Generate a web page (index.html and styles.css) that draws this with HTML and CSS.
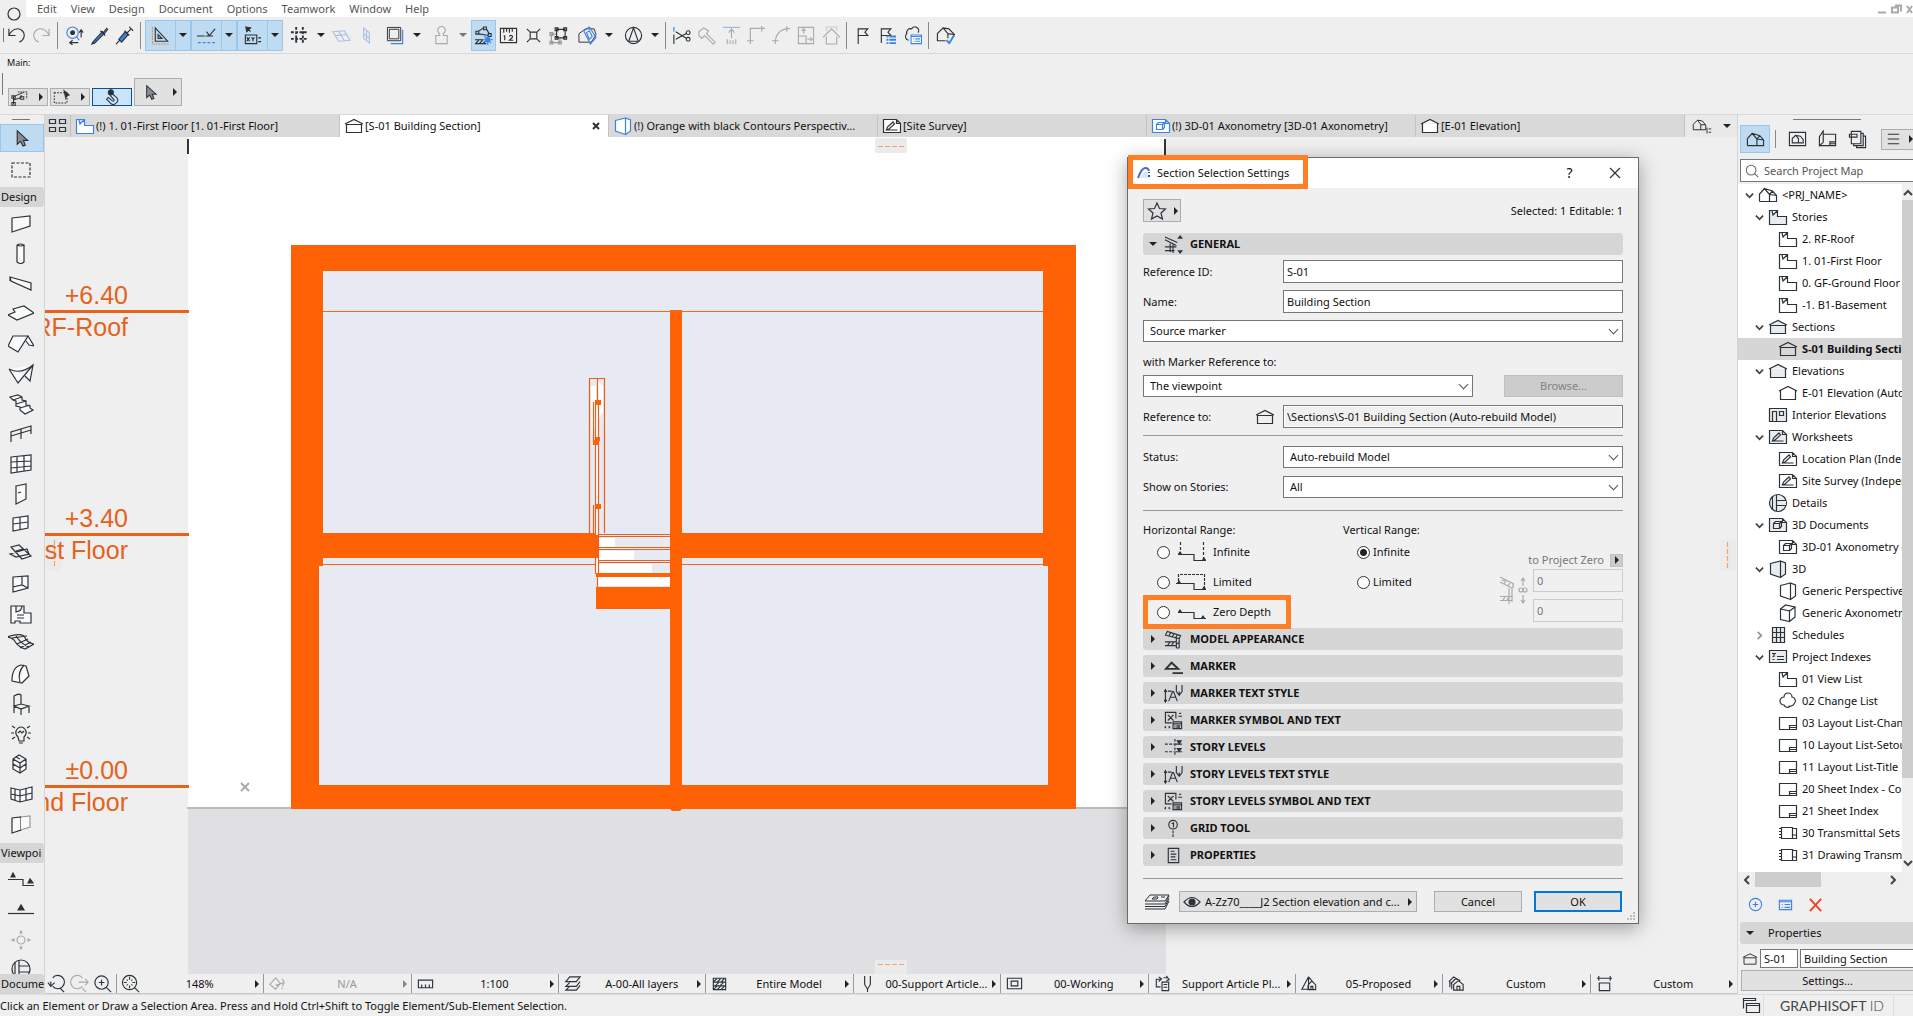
FILE: index.html
```html
<!DOCTYPE html>
<html lang="en">
<head>
<meta charset="utf-8">
<title>Section Selection Settings</title>
<link rel="stylesheet" href="styles.css">
</head>
<body>
<svg class="defs" aria-hidden="true">
  <symbol id="story" viewBox="0 0 20 20"><path d="M1.500 3.500h8v6h9v8h-17zM4 4l1 4 4-4"/></symbol>
  <symbol id="section" viewBox="0 0 20 20"><path d="M2.500 8.500h15v8h-15zM1 8l9-4.500L19 8"/></symbol>
  <symbol id="elevation" viewBox="0 0 20 20"><path d="M1 8l9-4.500L19 8M2.500 7.500v9h15v-9"/></symbol>
  <symbol id="interior" viewBox="0 0 20 20"><path d="M1.500 3.500h17v13h-17zM4.500 16.500v-10h4v10M11.500 6.500h4v4h-4z"/></symbol>
  <symbol id="worksheet" viewBox="0 0 20 20"><path d="M1.500 3.500h13l4 4v9h-17zM14.500 3.500v4h4M4.500 14l1-3 5.500-5 1.500 2-5.500 5zM4.500 14h11"/></symbol>
  <symbol id="detail" viewBox="0 0 20 20"><circle cx="10" cy="10" r="8.500"/><path d="M8.500 2v16M4.500 4v12M18 7.500H8.500v5H18"/></symbol>
  <symbol id="doc3d" viewBox="0 0 20 20"><path d="M1.500 3.500h13l4 4v9h-17zM14.500 3.500v4h4M5.500 8.500h6v5h-6zM5.500 8.500l2-2h6l-2 2M13.500 6.500v5l-2 2"/></symbol>
  <symbol id="persp" viewBox="0 0 20 20"><path d="M2.500 4.500l10-2.500v16.500L2.500 15zM12.500 2l5 2v11l-5 3.500"/></symbol>
  <symbol id="axo" viewBox="0 0 20 20"><path d="M2.500 6l9 2v10.500l-9-2zM2.500 6l5-4 9.500 2-5.500 4M17 4v10l-5.500 4.500"/></symbol>
  <symbol id="schedule" viewBox="0 0 20 20"><path d="M4.500 2.500h12v15h-12zM4.500 7.500h12M4.500 12.500h12M8.500 2.500v15M12.500 2.500v15"/></symbol>
  <symbol id="index" viewBox="0 0 20 20"><path d="M1.500 3.500h17v12h-17zM4 6.500h4M6 6.500v3M4.500 12.500h2M9 9.500h7M9 12.500h7M4.500 9.500h2"/></symbol>
  <symbol id="cloud" viewBox="0 0 20 20"><path d="M6 6a4 4 0 0 1 8 0a4 4 0 0 1 2 7a4 4 0 0 1-4 2a3.500 3.500 0 0 1-6-1a4 4 0 0 1 0-8z"/></symbol>
  <symbol id="layout" viewBox="0 0 20 20"><path d="M1.500 4.500h17v12h-17zM11.500 16.500v-4h7M11.500 14.500h7"/></symbol>
  <symbol id="transmit" viewBox="0 0 20 20"><path d="M3.500 4.500h11v11h-11zM14.500 5.500h4v10h-4M14.500 12h4M1 5.500h3M1 8.500h3M1 11.500h3M1 14.500h3"/></symbol>
  <symbol id="house" viewBox="0 0 20 20"><path d="M1.500 16.500V9l5-5.500 5 6v7M1.500 16.500h17v-6l-4-4.500-8-2.500M11.500 9.500l7 1M11.500 9.500l3-3.500"/></symbol>
  <symbol id="chev" viewBox="0 0 10 10"><path d="M1 3l4 4 4-4"/></symbol>
  <symbol id="tri-r" viewBox="0 0 6 8"><path d="M1 0l4 4-4 4z" fill="currentColor" stroke="none"/></symbol>
  <symbol id="tri-d" viewBox="0 0 8 6"><path d="M0 1h8l-4 4z" fill="currentColor" stroke="none"/></symbol>
  <symbol id="arrow" viewBox="0 0 20 20"><path d="M5.500 2v14l3.500-3 2.500 5 2.500-1-2-5h4.500z" fill="#898d92"/></symbol>
  <symbol id="textstyle" viewBox="0 0 20 20"><path d="M1.500 7v11M0 8.500L1.500 6 3 8.500M0 16.500L1.500 19 3 16.500M4 7.500h4M5 18l4-10h1l4 10M7 14h5M13 1v7l3 4 3-4V1M16 8v4"/></symbol>
  <symbol id="symtext" viewBox="0 0 20 20"><path d="M8 12.500H1.500v-11h11V8M4 4l6 6M10 4l-6 6M9.500 11.500h9v7h-9zM9.500 13.500h9M11 15.500h1M13 15.500h4M11 17h1M13 17h4M16 2.500h2M15 5.500h4M2 16l-1 1 1 1M5 16l1 1-1 1"/></symbol>
  <symbol id="cut" viewBox="0 0 20 20"><path d="M1.500 5.500l2-4 14 4.500-1.500 3zM5 6.500l2-3.500M8.500 7.500l2-3.500M12 8.500l2-3.500M1 12.500h12M1 16.500h12M13 9v10M16 9v10M13 19h3M4 16l2-3M8 16l2-3M13 15l3-2"/></symbol>
</svg>

<header class="menubar">
  <span class="app"><svg viewBox="0 0 14 14"><circle cx="7" cy="7" r="6"/></svg></span>
  <nav><a href="#">Edit</a><a href="#">View</a><a href="#">Design</a><a href="#">Document</a><a href="#">Options</a><a href="#">Teamwork</a><a href="#">Window</a><a href="#">Help</a></nav>
  <svg class="wctl" viewBox="0 0 36 12"><path d="M1 9.500h8M15 4.500h6v5h-6zM18 2.500h6v6M30 3l5 7M35 3l-5 7"/></svg>
</header>

<div class="toolbar">
  <i class="grip"></i>
  <button aria-label="Undo"><svg viewBox="0 0 20 20"><path d="M2 3v7h7M2 10C5 3 12 1 16 5s2 10-3 12"/></svg></button>
  <button aria-label="Redo" class="off"><svg viewBox="0 0 20 20"><path d="M18 3v7h-7M18 10C15 3 8 1 4 5s-2 10 3 12"/></svg></button>
  <i class="sep"></i>
  <button aria-label="Find"><svg viewBox="0 0 20 20"><g class="bl"><circle cx="8" cy="7" r="6"/><path d="M12 11l3 4"/></g><circle cx="8" cy="7" r="2" fill="#2b3339"/><path d="M17 5v7M15 7l2-3 2 3M6 17.500h8M8 15l-3 2.500 3 2.500"/></svg></button>
  <button aria-label="Pick up parameters"><svg viewBox="0 0 20 20"><path d="M3 17L13 6l2 2L5 18l-3 1z" fill="#3c7fe0"/><path d="M11 5l5 5M14 7l4-5M15 8l4-5"/></svg></button>
  <button aria-label="Inject parameters"><svg viewBox="0 0 20 20"><path d="M4 14l7-8 3 3-7 8z" fill="#3c7fe0"/><path d="M1 19l4-4M10 5l5 5M13 7l4-4M15 1l4 4"/></svg></button>
  <i class="sep"></i>
  <span class="combo on"><button aria-label="Guide lines"><svg viewBox="0 0 20 20"><path d="M4.500 2v14h13zM7.500 9v4h4z"/><path d="M1.500 1v18h17" stroke="#e58a43" stroke-dasharray="2 1"/></svg></button><button class="dd" aria-label="More"><svg><use href="#tri-d"/></svg></button></span>
  <span class="combo on"><button aria-label="Snap guides"><svg viewBox="0 0 20 20"><path d="M0 10.500h8M9 10.500h8M10 6l3 4 6-7"/><path class="bl" d="M1 17.500h18" stroke-dasharray="3 2"/></svg></button><button class="dd" aria-label="More"><svg><use href="#tri-d"/></svg></button></span>
  <span class="combo on"><button aria-label="Tracker"><svg viewBox="0 0 20 20"><path d="M3 1l5 1-4 4zM4 2l4 4" fill="#2b3339"/><path d="M2.500 9.500h12v9h-12zM4 12l3 4M7 12l-3 4M9 12l1.500 2 1.500-2M10.500 14v2M16 12.500h3M16 16.500h3"/></svg></button><button class="dd" aria-label="More"><svg><use href="#tri-d"/></svg></button></span>
  <span class="combo"><button aria-label="Grid snap"><svg viewBox="0 0 20 20"><path d="M6.500 1v18M13.500 1v18M1 6.500h18M1 13.500h18" stroke-dasharray="3 1.500" stroke-width="2"/></svg></button><button class="dd" aria-label="More"><svg><use href="#tri-d"/></svg></button></span>
  <button aria-label="Editing plane" class="pale"><svg viewBox="0 0 20 20"><path d="M1 6l12-1 6 10-12 1zM4 10l12-1M7 5.500l6 10"/></svg></button>
  <button aria-label="Vertical plane" class="pale"><svg viewBox="0 0 20 20"><path d="M7 2l6 5v11l-6-5zM10 4v11M7 8l6 5"/></svg></button>
  <span class="combo"><button aria-label="Trace"><svg viewBox="0 0 20 20"><path class="bl" d="M5 18.500h12.500V4"/><path d="M1.500 1.500h14v14h-14zM3.500 3.500h10v10h-10z" stroke-width="1"/></svg></button><button class="dd" aria-label="More"><svg><use href="#tri-d"/></svg></button></span>
  <span class="combo off"><button aria-label="Gravity"><svg viewBox="0 0 20 20"><path d="M8 8a4 4 0 1 1 4 0v2h4v8.500H4V10h4z"/></svg></button><button class="dd" aria-label="More"><svg><use href="#tri-d"/></svg></button></span>
  <button aria-label="Suspend groups" class="on solo"><svg viewBox="0 0 20 20"><path d="M4 6l6-4M13 3l3 5M4 8l11 2M2 5.500h3v3H2zM10 1h3v3h-3zM15 8h3v3h-3zM1 14.500h9M1 18.500h12M2 18l3-3M6 18l3-3M10 18l2-2"/><path d="M12 12h5v5h-5z" fill="#2f80ed" stroke="none"/><path class="bl" d="M14.500 10v10M9 14.500h11M11 11l7 7"/></svg></button>
  <button aria-label="Measure"><svg viewBox="0 0 20 20"><path d="M1.500 2.500h17v15h-17zM5 3v4M8 3v3M11 3v4M14 3v3M6 10v5M5 11l1-1M11 11c1-2 4-1 3 1l-3 3h4"/></svg></button>
  <button aria-label="Explode"><svg viewBox="0 0 20 20"><path d="M6.500 6.500h7v7h-7zM3 3l3 3M17 3l-3 3M3 17l3-3M17 17l-3-3"/></svg></button>
  <button aria-label="Group"><svg viewBox="0 0 20 20"><path d="M8 3.500h9v9H8zM6.500 2h3v3h-3zM15.500 2h3v3h-3zM6.500 11h3v3h-3zM15.500 11h3v3h-3z"/><path d="M2.500 8.500h5M2.500 8.500v9h9v-4M1 7h3v3H1zM1 16h3v3H1zM10 16h3v3h-3z" stroke="#999"/></svg></button>
  <span class="combo"><button aria-label="3D cutaway"><svg viewBox="0 0 20 20"><path d="M1 8l7-5h9l2 6-5 8H1z" stroke-width="1"/><path class="bl" d="M6 5l6-4 7 11-6 7zM9 7l3-2 3 6-3 3z"/></svg></button><button class="dd" aria-label="More"><svg><use href="#tri-d"/></svg></button></span>
  <span class="combo"><button aria-label="Orientation"><svg viewBox="0 0 20 20"><circle cx="10" cy="10" r="8.500"/><path d="M10 2L5 16h10z"/></svg></button><button class="dd" aria-label="More"><svg><use href="#tri-d"/></svg></button></span>
  <i class="sep tight"></i>
  <button aria-label="Split"><svg viewBox="0 0 20 20"><path class="bl" d="M2 1v5"/><path d="M2 9v10M4 6l11 7M4 14L15 8"/><circle cx="17" cy="7" r="2"/><circle cx="17" cy="14" r="2"/></svg></button>
  <button aria-label="Adjust" class="off"><svg viewBox="0 0 20 20"><path d="M2 6l5-4 5 3-2 3 9 9-2 2-9-9-3 3-3-3z"/></svg></button>
  <button aria-label="Elevate" class="off"><svg viewBox="0 0 20 20"><path class="bl" d="M1 1.500h18" opacity=".5"/><path d="M10 4v9M7 7l3-4 3 4M5.500 14v5M8.500 15v4M11.500 15v4M14.500 14v5"/></svg></button>
  <button aria-label="Intersect" class="off"><svg viewBox="0 0 20 20"><path d="M3.500 19V2.500H19M15.500 0v6M0 15.500h7"/></svg></button>
  <button aria-label="Fillet" class="off"><svg viewBox="0 0 20 20"><path d="M3.500 19C3 9 8 3 19 2.500M15.500 0v6M0 15.500h7"/></svg></button>
  <button aria-label="Resize" class="off"><svg viewBox="0 0 20 20"><path d="M1.500 1.500h16v17h-16zM1.500 10.500h8v8M7 8V3M5 5l2-2 2 2M11 14h5M14 12l2 2-2 2"/></svg></button>
  <button aria-label="Roof crop" class="off"><svg viewBox="0 0 20 20"><path d="M1 12l9-9 9 9M4.500 11v8h11v-8"/><path d="M4.500 5V1h11v4" opacity=".5"/></svg></button>
  <i class="sep tight"></i>
  <button aria-label="Flag"><svg viewBox="0 0 20 20"><path d="M5.500 19V3h10l-3 3.500 3 3.500h-10"/></svg></button>
  <button aria-label="Flag list"><svg viewBox="0 0 20 20"><path d="M3.500 18V3h10l-3 3.500 3 3.500h-10"/><path class="bl" d="M9 11h2M12 11h7M9 14.500h2M12 14.500h7M9 18h2M12 18h7" stroke-width="2"/></svg></button>
  <button aria-label="Change manager"><svg viewBox="0 0 20 20"><path d="M6 15a4 4 0 0 1-2-7a4 4 0 0 1 5-5a4 4 0 0 1 7 4"/><path class="bl" d="M8.500 9.500h11v9h-11zM8.500 11h11M11 13.500h1M13 13.500h5M11 16h1M13 16h5" fill="#fff"/></svg></button>
  <i class="sep"></i>
  <button aria-label="Model check"><svg viewBox="0 0 20 20"><path d="M10 15.500H1.500V8l6-6 5 6v5M7.500 2l6 1 6 6-2 3M12.500 8l6 1"/><path class="bl" d="M11 15l3 3 5-8" stroke-width="2"/></svg></button>
</div>

<div class="infobox">
  <p>Main:</p>
  <div class="info-row">
    <i class="grip"></i>
    <button aria-label="Selection method"><svg viewBox="0 0 20 20"><path d="M3 18V9l12-5M3 13l9-3v-3M1 16h4v3H1zM1 8h4v3H1zM11 9h4v3h-4z"/><path d="M8 3.500h10.500v8" stroke-dasharray="2 1"/></svg><svg class="t"><use href="#tri-r"/></svg></button>
    <button aria-label="Marquee selection"><svg viewBox="0 0 20 20"><path d="M1.500 4.500h15v12h-15z" stroke-dasharray="2 1.500"/><path d="M13 2l6 5-3 1-1 3z" fill="#2b3339"/></svg><svg class="t"><use href="#tri-r"/></svg></button>
    <button class="on" aria-label="Quick selection"><svg viewBox="0 0 20 20"><path d="M9 5l6 5q3 4-1 7t-7-1l-4-4 2-2 5 4q2 1 2-1L6 6z"/><circle cx="8" cy="4" r="3" fill="#2b3339"/></svg></button>
    <button class="big" aria-label="Arrow tool"><svg><use href="#arrow"/></svg><svg class="t"><use href="#tri-r"/></svg></button>
  </div>
</div>

<main class="workspace">
  <aside class="toolbox">
    <i class="hgrip"></i>
    <button class="on" aria-label="Arrow"><svg><use href="#arrow"/></svg></button>
    <button aria-label="Marquee"><svg viewBox="0 0 26 22"><path d="M4 4h18v14H4z" stroke-dasharray="3 1.500"/></svg></button>
    <h2>Design</h2>
    <button aria-label="Wall"><svg viewBox="0 0 26 22"><path class="w" d="M4 5l18-2v10L4 19z"/></svg></button>
    <button aria-label="Column"><svg viewBox="0 0 26 22"><path class="w" d="M9 2v17q4 3 7 0V2M9 2q3-2 7 0q-3 2-7 0"/></svg></button>
    <button aria-label="Beam"><svg viewBox="0 0 26 22"><path class="w" d="M2 4l21 6v7L3 8zM2 4v4"/></svg></button>
    <button aria-label="Slab"><svg viewBox="0 0 26 22"><path class="w" d="M0 12l7-3-2-3 11-3 10 7-17 7z"/></svg></button>
    <button aria-label="Roof"><svg viewBox="0 0 26 22"><path class="w" d="M5 3h15L10 19 0 13zM20 3l6 10-5-1-3-4"/></svg></button>
    <button aria-label="Shell"><svg viewBox="0 0 26 22"><path class="w" d="M1 6q12 6 24-4l-3 16-5-5M1 6l9 14L25 2"/></svg></button>
    <button aria-label="Stair"><svg viewBox="0 0 26 22"><path class="w" d="M2 4l8-2 4 2v3l4 1v4l4 1v2l3 2-8 4-5-4v-3l-4-1V8L5 7z"/><path d="M5 7l9-3M8 11l10-3M12 15l10-3"/></svg></button>
    <button aria-label="Railing"><svg viewBox="0 0 26 22"><path d="M3 19V9l20-6v8M13 6v10M3 13l20-6"/></svg></button>
    <button aria-label="Curtain wall"><svg viewBox="0 0 26 22"><path class="w" d="M3 4l20-2v15L3 20zM3 9l20-1M3 15l20-2M9 3v16M16 3v15"/></svg></button>
    <button aria-label="Door"><svg viewBox="0 0 26 22"><path class="w" d="M8 3l10-2v15L8 21zM10 10l3-1"/></svg></button>
    <button aria-label="Window"><svg viewBox="0 0 26 22"><path class="w" d="M5 5l15-2v12L5 18zM5 11l15-2M12 4v13"/></svg></button>
    <button aria-label="Skylight"><svg viewBox="0 0 26 22"><path d="M3 4l8-2 12 11-9 3zM2 11l17-5 2 5-13 3zM8 8l7-2"/></svg></button>
    <button aria-label="Opening"><svg viewBox="0 0 26 22"><path class="w" d="M5 4l15-1v12L5 19zM5 14l9-2 6 3M14 3v9"/></svg></button>
    <button aria-label="Zone"><svg viewBox="0 0 26 22"><path class="w" d="M3 3h13v7h7v10H12v-2H7v2H3zM8 3v6q6-1 6-6M9 12h7M9 15h7"/></svg></button>
    <button aria-label="Mesh"><svg viewBox="0 0 26 22"><path d="M-1 4q12-4 17-1 3 7 10 8l-9 5Q10 14 6 7 4 5-1 4M4 5l15-2M9 11l11-5M12 15l11-6M8 3q5 8 13 11"/></svg></button>
    <button aria-label="Morph"><svg viewBox="0 0 26 22"><path class="w" d="M4 18Q4 4 13 2l5 1 3 10-7 7zM16 2q-7 8-4 17"/></svg></button>
    <button aria-label="Object"><svg viewBox="0 0 26 22"><path d="M6 20V3q5-3 7-1v9M6 13l7-2 8 2-8 3zM13 15v7M21 13v7"/></svg></button>
    <button aria-label="Lamp"><svg viewBox="0 0 26 22"><path d="M10 14q-3-3-2-6 2-4 5-4t5 4q1 3-2 6v4h-5zM10 10l2-2 2 2 2-2M3 10h3M20 10h3M4 3l3 2M22 3l-3 2M4 16l3-2M22 16l-3-2M11 20h4"/></svg></button>
    <button aria-label="Equipment"><svg viewBox="0 0 26 22"><path class="w" d="M5 6l6-4 7 4v10l-6 4-7-4zM5 6l7 4 6-4M12 10v10M5 11l7 4 6-4M8 4l4 2"/></svg></button>
    <button aria-label="Curtain panel"><svg viewBox="0 0 26 22"><path class="w" d="M3 5l9 2 12-3v12l-12 3-9-3zM3 11l9 2 12-3M7 6v11M12 7v12M18 6v11"/></svg></button>
    <button aria-label="Panel"><svg viewBox="0 0 26 22"><path class="w" d="M4 5l9-1v13l-9 3z"/><path class="w" d="M13 4l9-1v11l-9 3" stroke="#999"/></svg></button>
    <h2 class="view">Viewpoi</h2>
    <button aria-label="Section"><svg viewBox="0 0 26 22"><path d="M0 10.500h15v6h11"/><path d="M3 8l2-4 2 4zM20 14l2-4 3 4z" fill="#2b3339"/></svg></button>
    <button aria-label="Elevation"><svg viewBox="0 0 26 22"><path d="M0 14.500h26"/><path d="M10 11l3-5 3 5z" fill="#2b3339"/></svg></button>
    <button aria-label="Interior elevation" class="off"><svg viewBox="0 0 26 22"><circle cx="13" cy="11" r="4"/><path d="M12 4l1-2 1 2zM12 18l1 2 1-2zM6 10l-2 1 2 1zM20 10l2 1-2 1z" fill="#999"/></svg></button>
    <button class="cutoff" aria-label="Detail"><svg viewBox="0 0 26 22"><circle cx="13" cy="11" r="9"/><path d="M11 2v18M7 4v14M22 8H11v6h11"/></svg></button>
    <h2>Docume</h2>
  </aside>

  <section class="center">
    <div class="tabs">
      <button class="pop" aria-label="Tab overview"><svg viewBox="0 0 20 16"><path d="M1.500 1.500h6v4h-6zM11.500 1.500h6v4h-6zM1.500 9.500h6v4h-6zM11.500 9.500h6v4h-6z"/></svg></button>
      <a href="#" class="tab blue"><svg><use href="#story"/></svg><span>(!) 1. 01-First Floor [1. 01-First Floor]</span></a>
      <a href="#" class="tab cur"><svg><use href="#section"/></svg><span>[S-01 Building Section]</span><svg class="x" viewBox="0 0 8 8"><path d="M1 1l6 6M7 1L1 7"/></svg></a>
      <a href="#" class="tab blue"><svg><use href="#persp"/></svg><span>(!) Orange with black Contours Perspectiv...</span></a>
      <a href="#" class="tab"><svg><use href="#worksheet"/></svg><span>[Site Survey]</span></a>
      <a href="#" class="tab blue"><svg><use href="#doc3d"/></svg><span>(!) 3D-01 Axonometry [3D-01 Axonometry]</span></a>
      <a href="#" class="tab"><svg><use href="#elevation"/></svg><span>[E-01 Elevation]</span></a>
      <button class="more" aria-label="Views"><svg viewBox="0 0 24 20"><path d="M1.500 14.500V8l5-5 4 5v6.500zM6.500 3l6 1 4 5v5.500h-6M10.500 8.500h6M18 12v7M20 13.500h3M20 17.500h3"/></svg><svg class="t"><use href="#tri-d"/></svg></button>
    </div>

    <div class="canvas">
      <svg viewBox="45 137 1692 837" preserveAspectRatio="xMinYMin slice">
        <rect x="188" y="137" width="978" height="670" fill="#fff"/>
        <rect x="188" y="809" width="978" height="165" fill="#e0e0e2"/>
        <rect x="187" y="807" width="979" height="2" fill="#bcbcbe"/>
        <path d="M188 139v15M1165 139v18" stroke="#333" stroke-width="2"/>
        <g fill="#ebebeb"><rect x="875" y="138" width="32" height="15" rx="2"/><rect x="875" y="960" width="32" height="14"/><rect x="46" y="535" width="16" height="36" rx="2"/><rect x="1720" y="539" width="16" height="32" rx="2"/></g>
        <path d="M878 146.500h27M878 964.500h27M54.500 540v28M1727.500 542v28" stroke="#f0a269" stroke-dasharray="5 2"/>
        <g class="level"><path d="M45 311.500h144M45 534.500h144M45 786.500h144"/>
          <text x="128" y="304">+6.40</text><text x="128" y="336">2. RF-Roof</text>
          <text x="128" y="527">+3.40</text><text x="128" y="559">1. 01-First Floor</text>
          <text x="128" y="779">±0.00</text><text x="128" y="811">0. GF-Ground Floor</text></g>
        <path d="M241 783l8 8M249 783l-8 8" stroke="#aaa" stroke-width="2"/>
        <rect x="291" y="245" width="785" height="564" fill="#ff6205"/>
        <path d="M670 809h12l-2 2h-8z" fill="#ff6205"/>
        <path d="M323 271h720v262H682V310h-12v223H323zM323 558h347v8H323zM682 558h361v8H682zM319 566h351v219H319zM682 566h366v219H682z" fill="#e7eaf2"/>
        <path d="M323 311.500h720M323 564.500h347M682 564.500h361" stroke="#f06a20" fill="none"/>
        <path d="M591 386h5v40l-4 10zM598 382l5 4v26l-4 6z" fill="#fff"/>
        <rect x="596" y="405" width="3" height="130" fill="#fff"/>
        <rect x="599" y="533" width="71" height="37" fill="#e7eaf2"/>
        <rect x="595" y="558" width="4" height="16" fill="#fff"/>
        <path d="M599 538h16v9h-16zM599 551h35v9h-35zM599 564h53v9h-53zM598 577h72v9h-72z" fill="#fff"/>
        <path d="M589.500 533V378.500h15V533M597.500 378v24M595.500 402v172M598.500 402v172M593.500 402v40M593.500 505v28M599 534.500h71M599 536.500h71M599 547.500h71M599 549.500h71M599 560.500h71M599 562.500h71M597.500 576v11" stroke="#e8601c" fill="none"/>
        <path d="M595 400h6v5h-6zM593 440h5v5h-5zM596 437h4v4h-4zM595 504h6v5h-6zM596 573h74v4h-74zM596 587h80v22h-80z" fill="#ff6205"/>
      </svg>
    </div>

    <div class="quick">
      <div class="zoom"><button aria-label="Previous zoom"><svg viewBox="0 0 20 20"><path d="M6 4a7 7 0 1 1 0 9M1 9l3 4 4-4M4 13V8M14 15l4 4"/></svg></button><button class="off" aria-label="Next zoom"><svg viewBox="0 0 20 20"><path d="M13 4a7 7 0 1 0 0 9M9 8.500h10M16 5l3 3.500-3 3.500M13 15l4 4"/></svg></button><button aria-label="Zoom in"><svg viewBox="0 0 20 20"><circle cx="9" cy="9" r="7"/><path d="M9 6v6M6 9h6M14 14l5 5"/></svg></button></div>
      <button class="cell"><svg viewBox="0 0 20 20"><circle cx="9" cy="9" r="7.500"/><path d="M9 3v3M9 12v3M3 9h3M12 9h3M6 6l1 1M12 6l-1 1M6 12l1-1M12 12l-1-1M14 14l5 5"/></svg><span>148%</span><svg class="t"><use href="#tri-r"/></svg></button>
      <button class="cell off"><svg viewBox="0 0 20 20"><path d="M2 11l6-7 5 6-5 6zM8 12l9-3M15 5l2 4-2 4M14 15h2"/></svg><span>N/A</span><svg class="t"><use href="#tri-r"/></svg></button>
      <button class="cell"><svg viewBox="0 0 20 20"><path d="M2.500 6.500h15v8h-15zM6 14v-3M10 14v-3M14 14v-3"/></svg><span>1:100</span><svg class="t"><use href="#tri-r"/></svg></button>
      <button class="cell"><svg viewBox="0 0 20 20"><path d="M3 8l4-5h11l-4 5zM7 9l-4 4h11l4-5M7 13l-4 4h11l4-5"/></svg><span>A-00-All layers</span><svg class="t"><use href="#tri-r"/></svg></button>
      <button class="cell"><svg viewBox="0 0 20 20"><path d="M3.500 4.500h13v12h-13zM4 8.500h12M4 12.500h12M4 8l3-3M8 8l3-3M12 8l3-3M4 16l3-3M8 16l3-3M12 16l3-3M6 12l3-3M11 12l3-3"/></svg><span>Entire Model</span><svg class="t"><use href="#tri-r"/></svg></button>
      <button class="cell"><svg viewBox="0 0 20 20"><path d="M7 2v9l3 5 3-5V2M10 16v3"/></svg><span>00-Support Article...</span><svg class="t"><use href="#tri-r"/></svg></button>
      <button class="cell"><svg viewBox="0 0 20 20"><path d="M2.500 4.500h15v11h-15zM6.500 7.500h7v5h-7z"/></svg><span>00-Working</span><svg class="t"><use href="#tri-r"/></svg></button>
      <button class="cell"><svg viewBox="0 0 20 20"><path d="M8 13.500H3.500v-8H8M6 3l3 2-3 3M9.500 8.500h7v9h-7zM11 4h4M14 2l3 4-3 1M11 11h4M11 14h4"/></svg><span>Support Article Pl...</span><svg class="t"><use href="#tri-r"/></svg></button>
      <button class="cell"><svg viewBox="0 0 20 20"><path d="M2 16L9 3v13zM9 3l6 7M8.500 16.500v-5l4-4 4 4v5zM11.500 16v-3h2v3"/></svg><span>05-Proposed</span><svg class="t"><use href="#tri-r"/></svg></button>
      <button class="cell"><svg viewBox="0 0 20 20"><path d="M2 8l5-5 5 3M4 10l5-5 5 2M7 17v-6l5-4 5 4v6zM10.500 17v-4h3v4M3 8v6M5 10v6"/></svg><span>Custom</span><svg class="t"><use href="#tri-r"/></svg></button>
      <button class="cell"><svg viewBox="0 0 20 20"><path d="M2 4.500h16M4 2v5M16 2v5M4.500 9.500h11v8h-11z"/></svg><span>Custom</span><svg class="t"><use href="#tri-r"/></svg></button>
    </div>
  </section>

  <aside class="navigator">
    <i class="hgrip"></i>
    <div class="navhead">
      <button class="on" aria-label="Project map"><svg><use href="#house"/></svg></button><i class="sep"></i>
      <button aria-label="View map"><svg viewBox="0 0 20 20"><path d="M1.500 2.500h17v14h-17zM4.500 13.500V9L8 5.500l3 3.500v4.500zM8 5.500l5 1 3 3.500v3.500h-5"/></svg></button>
      <button aria-label="Layout book"><svg viewBox="0 0 20 20"><path d="M1.500 16.500V7l4-6v12zM5.500 4.500h13v12h-17M12.500 16.500v-4h6M12.500 14.500h6"/></svg></button>
      <button aria-label="Publisher"><svg viewBox="0 0 20 20"><path d="M3.500 1.500h10v13h-10zM1.500 4.500h8v3h-8zM14 3.500h2v13H6v-2M16 6.500h2.500v12H9v-2"/></svg></button>
      <button class="list" aria-label="Options"><svg viewBox="0 0 20 20"><path d="M4 4.500h12M4 9.500h12M4 14.500h12"/></svg><svg class="t"><use href="#tri-r"/></svg></button>
    </div>
    <label class="search"><svg viewBox="0 0 16 16"><circle cx="7" cy="7" r="5.500"/><path d="M11 11l4 4"/></svg><input type="text" placeholder="Search Project Map" aria-label="Search Project Map"></label>
    <div class="treebox">
      <ul class="tree">
        <li><svg class="c"><use href="#chev"/></svg><svg><use href="#house"/></svg><a href="#">&lt;PRJ_NAME&gt;</a></li>
        <li class="l1"><svg class="c"><use href="#chev"/></svg><svg class="g"><use href="#story"/></svg><a href="#">Stories</a></li>
        <li class="l2"><svg><use href="#story"/></svg><a href="#">2. RF-Roof</a></li>
        <li class="l2"><svg><use href="#story"/></svg><a href="#">1. 01-First Floor</a></li>
        <li class="l2"><svg><use href="#story"/></svg><a href="#">0. GF-Ground Floor</a></li>
        <li class="l2"><svg><use href="#story"/></svg><a href="#">-1. B1-Basement</a></li>
        <li class="l1"><svg class="c"><use href="#chev"/></svg><svg class="g"><use href="#section"/></svg><a href="#">Sections</a></li>
        <li class="l2 cur"><svg><use href="#section"/></svg><a href="#">S-01 Building Section</a></li>
        <li class="l1"><svg class="c"><use href="#chev"/></svg><svg class="g"><use href="#elevation"/></svg><a href="#">Elevations</a></li>
        <li class="l2"><svg><use href="#elevation"/></svg><a href="#">E-01 Elevation (Auto</a></li>
        <li class="l1 leaf"><svg class="g"><use href="#interior"/></svg><a href="#">Interior Elevations</a></li>
        <li class="l1"><svg class="c"><use href="#chev"/></svg><svg class="g"><use href="#worksheet"/></svg><a href="#">Worksheets</a></li>
        <li class="l2"><svg><use href="#worksheet"/></svg><a href="#">Location Plan (Inde</a></li>
        <li class="l2"><svg><use href="#worksheet"/></svg><a href="#">Site Survey (Indepen</a></li>
        <li class="l1 leaf"><svg class="g"><use href="#detail"/></svg><a href="#">Details</a></li>
        <li class="l1"><svg class="c"><use href="#chev"/></svg><svg class="g"><use href="#doc3d"/></svg><a href="#">3D Documents</a></li>
        <li class="l2"><svg><use href="#doc3d"/></svg><a href="#">3D-01 Axonometry (</a></li>
        <li class="l1"><svg class="c"><use href="#chev"/></svg><svg class="g"><use href="#persp"/></svg><a href="#">3D</a></li>
        <li class="l2"><svg><use href="#persp"/></svg><a href="#">Generic Perspective</a></li>
        <li class="l2"><svg><use href="#axo"/></svg><a href="#">Generic Axonometry</a></li>
        <li class="l1"><svg class="c shut"><use href="#chev"/></svg><svg class="g"><use href="#schedule"/></svg><a href="#">Schedules</a></li>
        <li class="l1"><svg class="c"><use href="#chev"/></svg><svg class="g"><use href="#index"/></svg><a href="#">Project Indexes</a></li>
        <li class="l2"><svg><use href="#story"/></svg><a href="#">01 View List</a></li>
        <li class="l2"><svg><use href="#cloud"/></svg><a href="#">02 Change List</a></li>
        <li class="l2"><svg><use href="#layout"/></svg><a href="#">03 Layout List-Chan</a></li>
        <li class="l2"><svg><use href="#layout"/></svg><a href="#">10 Layout List-Setou</a></li>
        <li class="l2"><svg><use href="#layout"/></svg><a href="#">11 Layout List-Title</a></li>
        <li class="l2"><svg><use href="#layout"/></svg><a href="#">20 Sheet Index - Co</a></li>
        <li class="l2"><svg><use href="#layout"/></svg><a href="#">21 Sheet Index</a></li>
        <li class="l2"><svg><use href="#transmit"/></svg><a href="#">30 Transmittal Sets</a></li>
        <li class="l2"><svg><use href="#transmit"/></svg><a href="#">31 Drawing Transm</a></li>
      </ul>
      <div class="vscroll"><svg class="c up"><use href="#chev"/></svg><i></i><svg class="c"><use href="#chev"/></svg></div>
    </div>
    <div class="hscroll"><svg class="c lt"><use href="#chev"/></svg><i></i><svg class="c rt"><use href="#chev"/></svg></div>
    <div class="navtools">
      <button aria-label="New"><svg viewBox="0 0 16 16"><circle class="bl" cx="8" cy="8" r="6.500"/><path class="bl" d="M8 5v6M5 8h6"/></svg></button>
      <button aria-label="Settings"><svg viewBox="0 0 16 16"><path class="bl" d="M1.500 3.500h13v10h-13zM1.500 5h13M4 8h1M7 8h6M4 11h1M7 11h6"/></svg></button>
      <button aria-label="Delete"><svg viewBox="0 0 16 16"><path d="M2 2l12 13M14 2L2 15" stroke="#ee4023" stroke-width="2"/></svg></button>
    </div>
    <h2><svg class="t"><use href="#tri-d"/></svg>Properties</h2>
    <div class="props"><svg><use href="#section"/></svg><input class="pid" aria-label="ID" value="S-01"><input class="pname" aria-label="Name" value="Building Section"></div>
    <button class="settings">Settings...</button>
  </aside>

  <div class="dialog" role="dialog" aria-labelledby="dlg-title">
    <div class="titlebar">
      <svg class="logo" viewBox="0 0 14 14"><path d="M3 12q4-9 8-5v5z" fill="#dce5f6" stroke="none"/><path d="M1 12Q5 1 9 2q2 0 3 3" stroke="#4469c4" stroke-width="2"/><path d="M12 6v1M12 9v2" stroke="#334d99" stroke-width="2"/></svg>
      <h1 id="dlg-title">Section Selection Settings</h1>
      <button aria-label="Help">?</button>
      <button aria-label="Close"><svg viewBox="0 0 12 12"><path d="M1 1l10 10M11 1L1 11"/></svg></button>
    </div>
    <div class="mark mark-title"></div>
    <div class="body">
      <div class="toprow"><button class="btn star" aria-label="Favorites"><svg viewBox="0 0 20 20"><path d="M10 2l2.500 5.500 6 .5-4.500 4 1.500 6-5.500-3-5.500 3 1.500-6L1.500 8l6-.5z"/></svg><svg class="t"><use href="#tri-r"/></svg></button><span>Selected: 1 Editable: 1</span></div>
      <button class="fold"><svg class="t"><use href="#tri-d"/></svg><svg viewBox="0 0 20 20"><path d="M1 2l13 6M1 5l12 6M1 12.500h12M1 16.500h10M6.500 9v9M9.500 10v9"/><path d="M14 4l3-4 3 4zM14 16l3 4 3-4z" fill="#2b3339" stroke="none"/></svg>GENERAL</button>
      <div class="row"><label for="rid">Reference ID:</label><input id="rid" value="S-01"></div>
      <div class="row"><label for="nm">Name:</label><input id="nm" value="Building Section"></div>
      <div class="sel full"><select aria-label="Marker type"><option>Source marker</option></select></div>
      <label class="ref" for="mref">with Marker Reference to:</label>
      <div class="viewrow"><div class="sel"><select id="mref"><option>The viewpoint</option></select></div><button class="btn" disabled>Browse...</button></div>
      <div class="row"><label for="rto">Reference to:</label><svg class="ri"><use href="#section"/></svg><input id="rto" class="ro" readonly value="\Sections\S-01 Building Section (Auto-rebuild Model)"></div>
      <hr>
      <div class="row"><label for="st">Status:</label><div class="sel"><select id="st"><option>Auto-rebuild Model</option></select></div></div>
      <div class="row"><label for="ss">Show on Stories:</label><div class="sel"><select id="ss"><option>All</option></select></div></div>
      <hr class="gap">
      <div class="ranges">
        <fieldset>
          <legend>Horizontal Range:</legend>
          <label><input type="radio" name="h"><svg viewBox="0 0 30 22"><path d="M4.500 1v11M27.500 1v17" stroke-dasharray="3 2"/><path d="M2 13.500h16v6h12"/><path d="M2 13l2-3 2 3zM26 19l2-3 2 3z" fill="#2b3339" stroke="none"/></svg>Infinite</label>
          <label><input type="radio" name="h"><svg viewBox="0 0 30 22"><path d="M2.500 10V3.500h26V17" stroke-dasharray="3 1"/><path d="M0 12.500h18v6h12"/><path d="M1 12l2-3 2 3zM26 18l2-3 2 3z" fill="#2b3339" stroke="none"/></svg>Limited</label>
          <label><input type="radio" name="h"><svg viewBox="0 0 30 22"><path d="M2 11.500h16v6h12"/><path d="M2 11l2-3 2 3zM25 17l2-3 2 3z" fill="#2b3339" stroke="none"/></svg>Zero Depth</label>
          <div class="mark mark-zero"></div>
        </fieldset>
        <fieldset class="v">
          <legend>Vertical Range:</legend>
          <label><input type="radio" name="v" checked>Infinite</label>
          <label><input type="radio" name="v">Limited</label>
        </fieldset>
        <div class="offs">
          <p>to Project Zero<button class="btn" disabled aria-label="Reference level"><svg class="t"><use href="#tri-r"/></svg></button></p>
          <div><svg viewBox="0 0 30 28"><path d="M1 1l14 7M1 6l12 6v14M3 4l3 1M7 5l-2 3M11 7l-2 3M14 8v4M1 20.500h12M1 24.500h12M4 24l2-3M8 24l2-3M10 12v16M24 10V2M22 5l2-3 2 3M24 19v8M22 24l2 3 2-3"/><circle cx="22" cy="14" r="2"/><circle cx="26" cy="14" r="2"/></svg>
          <span><input disabled value="0" aria-label="Upper limit"><input disabled value="0" aria-label="Lower limit"></span></div>
        </div>
      </div>
      <div class="folds">
        <button class="fold"><svg class="t"><use href="#tri-r"/></svg><svg><use href="#cut"/></svg>MODEL APPEARANCE</button>
        <button class="fold"><svg class="t"><use href="#tri-r"/></svg><svg viewBox="0 0 20 20"><path d="M2 12.500h13L8 6zM9 17h11" stroke-width="2"/></svg>MARKER</button>
        <button class="fold"><svg class="t"><use href="#tri-r"/></svg><svg><use href="#textstyle"/></svg>MARKER TEXT STYLE</button>
        <button class="fold"><svg class="t"><use href="#tri-r"/></svg><svg><use href="#symtext"/></svg>MARKER SYMBOL AND TEXT</button>
        <button class="fold"><svg class="t"><use href="#tri-r"/></svg><svg viewBox="0 0 20 20"><path d="M1 6.500h10M1 14.500h10M11.500 1v18" stroke-dasharray="3 1.500"/><path d="M12 6.500h7M12 14.500h7"/><path d="M14 3h4l-2 3zM14 11h4l-2 3z" fill="#2b3339"/></svg>STORY LEVELS</button>
        <button class="fold"><svg class="t"><use href="#tri-r"/></svg><svg><use href="#textstyle"/></svg>STORY LEVELS TEXT STYLE</button>
        <button class="fold"><svg class="t"><use href="#tri-r"/></svg><svg><use href="#symtext"/></svg>STORY LEVELS SYMBOL AND TEXT</button>
        <button class="fold"><svg class="t"><use href="#tri-r"/></svg><svg viewBox="0 0 20 20"><circle cx="9.500" cy="6" r="4.500"/><path d="M8 5l2-1v5M9.500 12v3M9.500 16v3"/></svg>GRID TOOL</button>
        <button class="fold"><svg class="t"><use href="#tri-r"/></svg><svg viewBox="0 0 20 20"><path d="M4.500 2.500h11v15h-11zM7 5.500h4M7 8.500h6M7 11.500h5M7 14.500h6"/></svg>PROPERTIES</button>
      </div>
      <hr>
      <div class="foot">
        <svg class="lay" viewBox="0 0 26 18"><path d="M1 8l5-6h19l-4 6zM1 11h20l4-8M1 13.500h20l4-8M1 16h20l4-8M8 6l2-2h4l-1 2zM17 4h4" stroke-width="1"/></svg>
        <button class="btn lsel"><svg viewBox="0 0 20 20"><path d="M2 10q8-9 16 0q-8 9-16 0z"/><circle cx="10" cy="10" r="3" fill="#2b3339"/></svg><span>A-Zz70____J2 Section elevation and c...</span><svg class="t"><use href="#tri-r"/></svg></button>
        <button class="btn">Cancel</button><button class="btn ok">OK</button>
      </div>
    </div>
    <svg class="resize" viewBox="0 0 9 9"><path d="M6 1h2M6 4h2M6 7h2M3 4h2M3 7h2M0 7h2"/></svg>
  </div>
</main>

<footer class="status">
  <p>Click an Element or Draw a Selection Area. Press and Hold Ctrl+Shift to Toggle Element/Sub-Element Selection.</p>
  <div><svg viewBox="0 0 20 20"><path d="M5.500 7.500h13v9h-13zM5.500 9.500h13M2.500 12.500v-10h12V5M2.500 4.500h12"/></svg><span>GRAPHISOFT <b>ID</b></span></div>
</footer>
</body>
</html>
```
FILE: styles.css
```css
* { box-sizing: border-box; }
html, body { height: 100%; }
body {
  margin: 0;
  display: flex;
  flex-direction: column;
  overflow: hidden;
  background: #efefef;
  color: #111;
  font: 11px/16px "Noto Sans", "Open Sans", sans-serif;
}
.defs { position: absolute; width: 0; height: 0; }
svg { width: 20px; height: 20px; flex: none; fill: none; stroke: #2b3339; stroke-width: 1.2; }
.bl { stroke: #3c82e6; }
.w { fill: #fafafa; }
svg.t { width: 8px; height: 8px; color: #222; }
svg.c { width: 10px; height: 10px; stroke: #444; stroke-width: 2; }
button, input, select { font: inherit; color: inherit; margin: 0; }
button { border: 0; padding: 0; background: none; display: flex; align-items: center; justify-content: center; }
a { color: inherit; text-decoration: none; }
p, h1, h2 { margin: 0; font: inherit; }
.off svg { stroke: #aaa; color: #888; }
.pale svg { stroke: #a9bfe2; }
.sep { width: 1px; background: #8a8a8a; flex: none; }
.grip { width: 1px; background: #777; flex: none; }

/* menu */
.menubar { flex: none; height: 17px; display: flex; background: #fff; color: #555; }
.app { width: 26px; height: 24px; background: #efefef; padding: 7px 0 0 7px; flex: none; }
.app svg { width: 14px; height: 14px; display: block; }
.menubar nav { flex: 1; display: flex; gap: 14px; padding-left: 11px; line-height: 18px; }
.wctl { width: 36px; height: 12px; margin-top: 3px; stroke: #aaa; stroke-width: 2; }

/* toolbar */
.toolbar { flex: none; height: 37px; display: flex; align-items: center; border-bottom: 1px solid #d8d8d8; padding: 0 2px 0 3px; }
.toolbar .grip { height: 14px; }
.toolbar button { width: 25px; height: 31px; flex: none; }
.toolbar svg { width: 19px; height: 19px; }
.toolbar .sep { height: 27px; margin: 0 4px 0 3px; }
.toolbar .tight { margin: 0 3px 0 2px; }
.toolbar .combo { display: flex; flex: none; margin: 0 1px 0 2px; }
.toolbar .combo button { width: 28px; }
.toolbar .combo .dd { width: 15px; }
.toolbar .combo.on { margin: 0; background: #bfdbf1; border: 1px solid #99c7ec; }
.toolbar .combo.on button { height: 29px; width: 29px; }
.toolbar .combo.on .dd { width: 15px; border-left: 1px solid #99c7ec; }
.toolbar .dd svg { width: 8px; height: 6px; color: #222; }
.toolbar .combo.off .dd svg { color: #777; }
.toolbar .solo { background: #bfdbf1; border: 1px solid #99c7ec; }

/* info box */
.infobox { flex: none; height: 61px; padding: 1px 0 0 2px; border-bottom: 1px solid #d8d8d8; }
.infobox p { padding-left: 5px; font-size: 9px; }
.info-row { display: flex; align-items: flex-end; gap: 2px; height: 35px; }
.info-row .grip { height: 22px; margin: 0 3px 11px 0; }
.info-row button { width: 40px; height: 18px; gap: 9px; border: 1px solid #adadad; background: #e1e1e1; }
.info-row svg:first-child { width: 17px; height: 17px; }
.info-row .on { background: #cce4f7; border-color: #005499; }
.info-row .big { width: 48px; height: 28px; gap: 12px; padding-left: 4px; }

/* workspace */
.workspace { flex: 1; min-height: 0; display: flex; position: relative; }
.hgrip { display: block; height: 1px; background: #777; flex: none; }
.toolbox { width: 45px; flex: none; display: flex; flex-direction: column; border-right: 1px solid #d4d4d4; overflow: hidden; }
.toolbox .hgrip { width: 18px; margin: 4px 0 4px 12px; }
.toolbox button { height: 30px; flex: none; padding-right: 2px; }
.toolbox button svg { width: 26px; height: 22px; }
.toolbox .on { height: 28px; background: #bfdbf1; border: 1px solid #99c7ec; }
.toolbox .on svg { width: 19px; height: 19px; }
.toolbox .on + button { height: 35px; }
.toolbox h2 { height: 20px; margin-bottom: 2px; line-height: 20px; flex: none; background: #d6d6d6; border-radius: 0 3px 3px 0; white-space: nowrap; overflow: hidden; padding-left: 1px; }
.toolbox .view { margin-top: 4px; }
.toolbox .cutoff { flex: 1 1 0; min-height: 0; overflow: hidden; align-items: flex-start; padding-top: 3px; }
.toolbox h2:last-child { margin: 0; }
.center { flex: 1; min-width: 0; display: flex; flex-direction: column; }
.tabs { flex: none; height: 22px; display: flex; background: #d9d9d9; }
.tabs .pop { width: 26px; border-right: 1px solid #c0c0c0; }
.tabs .pop svg { width: 20px; height: 16px; }
.tab { flex: 1 1 0; min-width: 0; display: flex; align-items: center; gap: 1px; padding: 0 8px 0 4px; border-right: 1px solid #c4c4c4; white-space: nowrap; }
.tab span { flex: 1; overflow: hidden; }
.tab svg use { fill: #fff; }
.tab.blue svg { stroke: #3c82e6; }
.tab.cur { background: #fff; }
.tab .x { width: 8px; height: 8px; stroke-width: 2; }
.tabs .more { width: 52px; background: #e9e9e9; gap: 11px; }
.canvas { flex: 1; min-height: 0; overflow: hidden; }
.canvas svg { display: block; width: 100%; height: 100%; stroke: none; }
.level path { stroke: #e4621a; stroke-width: 3; }
.level text { fill: #e4621a; font: 25px "Liberation Sans", Arial, sans-serif; text-anchor: end; }

/* quick options */
.quick { flex: none; height: 20px; display: flex; border-bottom: 1px solid #c8c8c8; }
.quick svg:not(.t) { width: 19px; height: 19px; }
.zoom { width: 71px; flex: none; display: flex; gap: 3px; padding-left: 1px; }
.zoom button { width: 20px; }
.cell { flex: 1 1 0; min-width: 0; border-left: 1px solid #999; padding: 0 2px 0 4px; justify-content: flex-start; white-space: nowrap; }
.cell span { flex: 1; padding-left: 6px; }
.cell.off { color: #999; }

/* navigator */
.navigator { width: 176px; flex: none; display: flex; flex-direction: column; border-left: 1px solid #d4d4d4; overflow: hidden; }
.navigator .hgrip { width: 68px; margin: 4px auto 4px 55px; }
.navhead { display: flex; align-items: center; height: 30px; flex: none; padding-left: 2px; }
.navhead button { width: 30px; height: 28px; flex: none; }
.navhead svg:not(.t) { width: 19px; height: 19px; }
.navhead .sep { height: 18px; margin: 0 6px 0 5px; }
.navhead .on { background: #bfdbf1; border: 1px solid #99c7ec; }
.navhead .list { width: 36px; height: 21px; margin-left: 9px; border: 1px solid #adadad; background: #e1e1e1; justify-content: flex-start; padding-left: 2px; gap: 4px; }
.search { display: flex; align-items: center; height: 23px; flex: none; margin: 5px -2px 2px 2px; border: 1px solid #777; background: #fff; padding-left: 4px; gap: 5px; }
.search svg { width: 14px; height: 14px; stroke: #666; }
.search input { border: 0; padding: 0; min-width: 0; flex: 1; background: none; outline: 0; }
.search input::placeholder { color: #555; }
.treebox { flex: 1; min-height: 0; display: flex; }
.tree { list-style: none; margin: 0; padding: 0; flex: 1; min-width: 0; background: #fff; overflow: hidden; }
.tree li { display: flex; align-items: center; height: 22px; padding-left: 7px; white-space: nowrap; }
.tree svg:not(.c) { width: 20px; height: 20px; margin: 0 4px; }
.tree .c { width: 9px; height: 9px; }
.tree .shut { transform: rotate(-90deg); stroke: #999; }
.tree .g use { fill: #e9ecef; }
.tree .l1 { padding-left: 17px; }
.tree .leaf { padding-left: 26px; }
.tree .l2 { padding-left: 36px; }
.tree .cur { background: #d6d6d6; font-weight: 700; }
.vscroll { width: 11px; flex: none; display: flex; flex-direction: column; align-items: center; padding: 4px 0; }
.vscroll i { width: 11px; flex: 0 1 578px; margin: 2px 0 auto; background: #cdcdcd; }
.up { transform: rotate(180deg); }
.hscroll { display: flex; align-items: center; height: 15px; flex: none; padding: 0 15px 0 4px; gap: 3px; }
.hscroll i { width: 66px; height: 15px; background: #cdcdcd; margin-right: auto; }
.lt { transform: rotate(90deg); }
.rt { transform: rotate(-90deg); }
.navtools { display: flex; height: 35px; flex: none; padding-left: 10px; gap: 15px; }
.navtools svg { width: 15px; height: 15px; }
.navigator h2 { height: 22px; flex: none; display: flex; align-items: center; gap: 14px; margin: 0 0 5px 2px; padding-left: 6px; background: #d6d6d6; border-radius: 3px 0 0 3px; }
.props { display: flex; align-items: center; height: 19px; flex: none; gap: 2px; padding-left: 4px; margin-bottom: 2px; }
.props svg { width: 16px; height: 16px; }
.props input { height: 19px; border: 1px solid #777; background: #fff; padding: 0 3px; min-width: 0; }
.props .pid { width: 38px; }
.props .pname { flex: 1; border-right: 0; }
.settings { height: 21px; flex: none; margin: 0 0 3px 3px; border: 1px solid #adadad; border-right: 0; background: #e1e1e1; }

/* dialog */
.dialog { position: absolute; left: 1127px; top: 42px; width: 512px; background: #f0f0f0; border: 1px solid #6b6b6b; box-shadow: 0 4px 18px rgba(0, 0, 0, .35); }
.titlebar { height: 30px; background: #fff; display: flex; align-items: center; padding: 0 4px 0 9px; gap: 6px; }
.titlebar h1 { flex: 1; }
.titlebar button { width: 39px; height: 30px; font-size: 14px; }
.logo { width: 14px; height: 14px; }
.titlebar button svg { width: 12px; height: 12px; }
.mark { position: absolute; border: 5px solid #ff7f27; pointer-events: none; }
.mark-title { left: 0; top: -3px; width: 180px; height: 34px; }
.mark-zero { left: 0; bottom: -1px; width: 148px; height: 34px; }
.body { padding: 11px 15px; display: flex; flex-direction: column; }
.btn { border: 1px solid #adadad; background: #e1e1e1; }
.btn:disabled { background: #ccc; border-color: #bfbfbf; color: #838383; }
.toprow { display: flex; justify-content: space-between; align-items: center; height: 23px; margin-bottom: 11px; }
.star { width: 38px; height: 23px; gap: 5px; padding-left: 3px; }
.fold { height: 22px; width: 100%; justify-content: flex-start; background: #d6d6d6; border-radius: 3px; padding-left: 6px; gap: 7px; font-weight: 700; }
.fold svg:not(.t) { width: 19px; height: 19px; }
.row { display: flex; align-items: center; height: 23px; margin-top: 7px; }
.fold + .row { margin-top: 5px; }
.row label { width: 140px; }
.ri { width: 20px; height: 20px; margin: 0 8px 0 -28px; }
.body input:not([type]) { flex: 1; min-width: 0; height: 23px; border: 1px solid #777; padding: 0 3px; background: #fff; }
.body .ro { background: #f0f0f0 !important; box-shadow: inset 0 0 0 1px #fff; }
.sel { flex: 1; display: flex; position: relative; height: 22px; }
.sel select { appearance: none; flex: 1; border: 1px solid #777; border-radius: 0; background: #fff; padding: 0 6px; }
.sel::after { content: ""; position: absolute; right: 6px; top: 6px; width: 6px; height: 6px; border: solid #555; border-width: 0 1px 1px 0; transform: rotate(45deg); }
.full { flex: none; margin-top: 7px; }
.ref { margin: 12px 0 5px; }
.viewrow { display: flex; gap: 31px; height: 22px; margin-bottom: 1px; }
.viewrow .btn { width: 119px; }
hr { width: 100%; height: 1px; border: 0; background: #999; margin: 7px 0 2px; }
hr.gap { margin: 12px 0 8px; }
.ranges { display: flex; height: 109px; }
fieldset { position: relative; border: 0; margin: 0; padding: 0; width: 200px; flex: none; }
.v { width: 120px; }
legend { padding: 3px 0 0; height: 18px; }
fieldset label { display: flex; align-items: center; height: 30px; padding-left: 14px; }
fieldset label svg { width: 30px; height: 22px; margin: 0 7px 0 6px; }
.v label { gap: 3px; }
input[type=radio] { appearance: none; width: 13px; height: 13px; border: 1px solid #333; border-radius: 50%; background: #fff; flex: none; }
input[type=radio]:checked { background: radial-gradient(circle, #222 3px, #fff 4px); }
.offs { flex: 1; padding-top: 32px; color: #777; display: flex; flex-direction: column; white-space: nowrap; }
.offs p { display: flex; align-items: center; justify-content: flex-end; gap: 6px; height: 18px; }
.offs .btn { width: 13px; height: 13px; }
.offs div { display: flex; justify-content: flex-end; gap: 4px; }
.offs div svg { width: 30px; height: 28px; margin-top: 7px; stroke: #aaa; }
.offs span { display: flex; flex-direction: column; gap: 7px; width: 90px; }
.offs input:not([type]) { flex: none; background: #f0f0f0; border-color: #ccc; }
.folds { display: flex; flex-direction: column; gap: 5px; margin-bottom: 5px; }
.foot { display: flex; align-items: center; height: 21px; margin-top: 10px; }
.lay { width: 26px; height: 18px; margin: 0 9px 0 1px; }
.foot .btn { width: 88px; height: 21px; margin-left: 12px; }
.foot .lsel { width: 238px; flex: none; margin: 0 5px 0 0; padding: 0 2px; gap: 3px; white-space: nowrap; }
.lsel span { flex: 1; text-align: left; overflow: hidden; }
.foot .ok { border: 2px solid #0078d7; }
.resize { position: absolute; right: 2px; bottom: 2px; width: 9px; height: 9px; stroke: #bbb; stroke-width: 2; }

/* status line */
.status { flex: none; height: 22px; display: flex; align-items: center; border-top: 1px solid #ddd; }
.status p { flex: 1; }
.status div { width: 176px; display: flex; align-items: center; padding-left: 4px; color: #444; }
.status div span { flex: 1; margin: 0 19px 0 2px; padding-left: 16px; border: solid #ddd; border-width: 0 1px; font: 14px/21px Lato, sans-serif; white-space: nowrap; }
.status b { font-weight: 300; }
```
